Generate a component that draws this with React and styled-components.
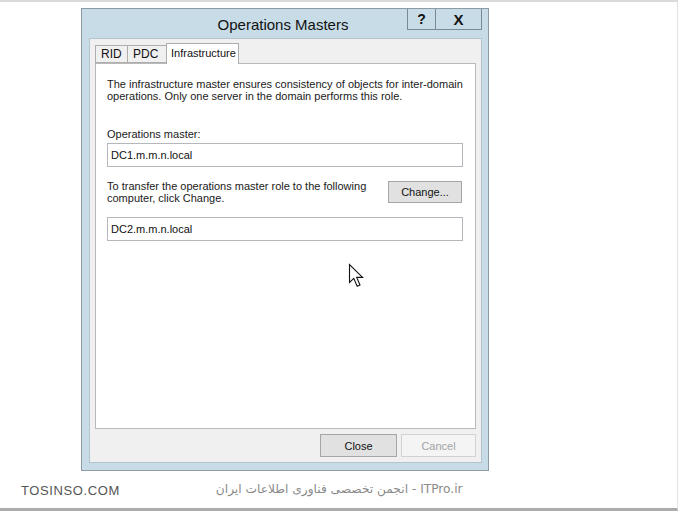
import React from "react";
import styled, { createGlobalStyle } from "styled-components";

const Global = createGlobalStyle`
  html, body { margin: 0; padding: 0; background: #fff; }
  * { box-sizing: border-box; }
`;

const Page = styled.div`
  position: relative;
  width: 678px;
  height: 511px;
  overflow: hidden;
  background: #fff;
  border-top: 2px solid #dadada;
  border-bottom: 3px solid #ababab;
  border-right: 1px solid #e2e2e2;
  font-family: "Liberation Sans", Arial, sans-serif;
  display: flex;
  flex-direction: column;
`;

const Dialog = styled.div`
  margin: 6px 0 0 81px;
  width: 408px;
  height: 463px;
  border: 1px solid #8c9ba6;
  background: #c7dce7;
  display: flex;
  flex-direction: column;
  padding: 0 6px 7px 7px;
`;

const TitleBar = styled.div`
  position: relative;
  height: 29px;
  display: flex;
  align-items: center;
  justify-content: center;
`;

const Title = styled.div`
  font-size: 15px;
  color: #111;
  margin-top: 1px;
  margin-left: -5px;
`;

const TitleButtons = styled.div`
  position: absolute;
  top: 0;
  right: 0;
  display: flex;
`;

const TitleButton = styled.div`
  width: ${(p) => p.$w}px;
  height: 21px;
  border: 1px solid #7a8a95;
  border-top: none;
  margin-left: -1px;
  background: #c7dce7;
  display: flex;
  align-items: center;
  justify-content: center;
  font-size: ${(p) => p.$fs}px;
  font-weight: bold;
  color: #111;
`;

const Client = styled.div`
  flex: 1;
  background: #f0f0f0;
  border: 1px solid #b4c3cc;
  display: flex;
  flex-direction: column;
  padding: 3px 5px 5px 5px;
`;

const Tabs = styled.div`
  display: flex;
  align-items: flex-end;
  height: 21px;
  padding-left: 1px;
  position: relative;
  z-index: 1;
`;

const Tab = styled.div`
  width: ${(p) => p.$w}px;
  height: ${(p) => (p.$active ? 21 : 18)}px;
  margin-bottom: ${(p) => (p.$active ? -1 : 0)}px;
  margin-left: -1px;
  border: 1px solid #adadad;
  border-bottom: ${(p) => (p.$active ? "none" : "1px solid #adadad")};
  background: ${(p) => (p.$active ? "#fff" : "#f0f0f0")};
  font-size: ${(p) => (p.$active ? 11 : 12)}px;
  color: #111;
  white-space: nowrap;
  display: flex;
  align-items: ${(p) => (p.$active ? "flex-start" : "center")};
  padding: ${(p) => (p.$active ? "3px 4px 0" : "0 5px")};
`;

const Panel = styled.div`
  position: relative;
  flex: 1;
  background: #fff;
  border: 1px solid #b9b9b9;
  padding: 14px 12px 0 11px;
  font-size: 11px;
  line-height: 12px;
  color: #1a1a1a;
`;

const Paragraph = styled.div`
  margin-bottom: ${(p) => p.$mb || 0}px;
`;

const Field = styled.div`
  width: 356px;
  height: 24px;
  border: 1px solid #b5b7bc;
  padding: 5px 3px 0;
  font-size: 11px;
  color: #111;
`;

const TransferRow = styled.div`
  display: flex;
  justify-content: space-between;
  align-items: center;
  width: 355px;
  margin: 13px 0 13px;
`;

const Button = styled.div`
  width: ${(p) => p.$w}px;
  height: ${(p) => p.$h}px;
  border: 1px solid ${(p) => (p.$disabled ? "#d3d3d3" : "#a6a6a6")};
  background: ${(p) => (p.$disabled ? "#f4f4f4" : "#e1e1e1")};
  color: ${(p) => (p.$disabled ? "#a3a3a3" : "#111")};
  font-size: 11px;
  display: flex;
  align-items: center;
  justify-content: center;
`;

const ButtonRow = styled.div`
  display: flex;
  justify-content: flex-end;
  gap: 4px;
  margin-top: 5px;
`;

const Cursor = styled.svg`
  position: absolute;
  left: 252px;
  top: 199px;
`;

const Footer = styled.div`
  display: flex;
  align-items: center;
  height: 34px;
  padding-top: 2px;
`;

const Brand = styled.div`
  margin-left: 21px;
  margin-top: 3px;
  font-size: 13px;
  color: #555;
  letter-spacing: 0.6px;
`;

const Persian = styled.div`
  margin-left: 96px;
  width: 252px;
  font-family: "DejaVu Sans", "Noto Sans", sans-serif;
  font-size: 12.2px;
  color: #8a8a8a;
  text-align: left;
  white-space: nowrap;
`;

export default function App() {
  return (
    <>
      <Global />
      <Page>
        <Dialog>
          <TitleBar>
            <Title>Operations Masters</Title>
            <TitleButtons>
              <TitleButton $w={29} $fs={14}>?</TitleButton>
              <TitleButton $w={47} $fs={15}>X</TitleButton>
            </TitleButtons>
          </TitleBar>
          <Client>
            <Tabs>
              <Tab $w={33}>RID</Tab>
              <Tab $w={40}>PDC</Tab>
              <Tab $w={73} $active>
                Infrastructure
              </Tab>
            </Tabs>
            <Panel>
              <Paragraph $mb={26}>
                The infrastructure master ensures consistency of objects for inter-domain
                <br />
                operations. Only one server in the domain performs this role.
              </Paragraph>
              <Paragraph $mb={3}>Operations master:</Paragraph>
              <Field>DC1.m.m.n.local</Field>
              <TransferRow>
                <Paragraph>
                  To transfer the operations master role to the following
                  <br />
                  computer, click Change.
                </Paragraph>
                <Button $w={74} $h={22}>Change...</Button>
              </TransferRow>
              <Field>DC2.m.m.n.local</Field>
              <Cursor width="18" height="26" viewBox="0 0 18 26">
                <path
                  d="M1.5 1.5 L1.5 19.5 L5.8 15.4 L9.2 23.2 L12 22 L8.7 14.4 L14.6 14.4 Z"
                  fill="#fff"
                  stroke="#111"
                  strokeWidth="1.1"
                  strokeLinejoin="miter"
                />
              </Cursor>
            </Panel>
            <ButtonRow>
              <Button $w={77} $h={23}>Close</Button>
              <Button $w={75} $h={23} $disabled>
                Cancel
              </Button>
            </ButtonRow>
          </Client>
        </Dialog>
        <Footer>
          <Brand>TOSINSO.COM</Brand>
          <Persian dir="rtl">ITPro.ir - انجمن تخصصی فناوری اطلاعات ایران</Persian>
        </Footer>
      </Page>
    </>
  );
}
